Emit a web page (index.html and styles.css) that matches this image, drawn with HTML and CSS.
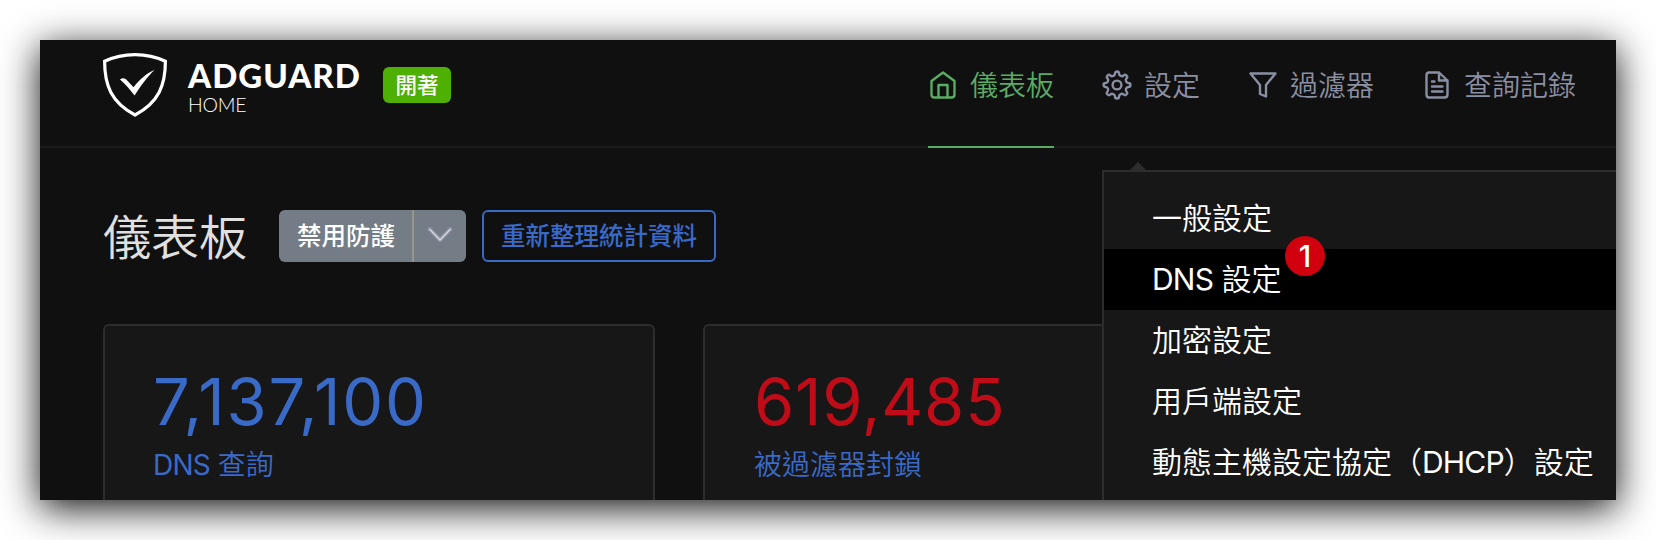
FILE: index.html
```html
<!DOCTYPE html>
<html lang="zh-Hant">
<head>
<meta charset="utf-8">
<title>AdGuard Home</title>
<link rel="stylesheet" href="styles.css">
</head>
<body>
<div class="window">
  <header class="header">
    <div class="brand">
      <svg class="shield" viewBox="0 0 64 64" fill="none">
        <path d="M32 1.6C21.500 1.600 10.500 4 1.600 8.300C1.600 32 8 49 32 62C56 49 62.400 32 62.400 8.300C53.500 4 42.500 1.600 32 1.600Z" stroke="#fff" stroke-width="3.2"/>
        <path d="M17 26.500C19.500 24.600 22 25 24.200 27.600L30.500 34.200C37 26.500 44 19.500 51.500 17C44.500 23.500 37.500 33 31.600 42.500C27.500 37 22.500 31.500 17 26.500Z" fill="#fff"/>
      </svg>
      <div class="wordmark"><span class="name">ADGUARD</span><span class="sub">HOME</span></div>
      <span class="status">開著</span>
    </div>
    <nav class="nav">
      <a class="link active"><svg class="icon" viewBox="0 0 30 30"><path d="M15 2.500L3.500 11V24.500Q3.500 27.500 6.500 27.500H23.500Q26.500 27.500 26.500 24.500V11Z M10.500 27.500V15H19.500V27.500"/></svg><span>儀表板</span></a>
      <a class="link"><svg class="icon" viewBox="0 0 30 30"><circle cx="15" cy="15" r="4.400"/><path d="M26.420 12.990A2.010 2.010 0 0 1 26.420 17.010A2.800 2.800 0 0 0 24.500 21.650A2.010 2.010 0 0 1 21.650 24.500A2.800 2.800 0 0 0 17.010 26.420A2.010 2.010 0 0 1 12.990 26.420A2.800 2.800 0 0 0 8.350 24.500A2.010 2.010 0 0 1 5.500 21.650A2.800 2.800 0 0 0 3.580 17.010A2.010 2.010 0 0 1 3.580 12.990A2.800 2.800 0 0 0 5.500 8.350A2.010 2.010 0 0 1 8.350 5.500A2.800 2.800 0 0 0 12.990 3.580A2.010 2.010 0 0 1 17.010 3.580A2.800 2.800 0 0 0 21.650 5.500A2.010 2.010 0 0 1 24.500 8.350A2.800 2.800 0 0 0 26.420 12.990Z"/></svg><span>設定</span></a>
      <a class="link"><svg class="icon" viewBox="0 0 30 30"><path d="M2.500 3.500H27.500L18 15V26.500L12 24V15Z"/></svg><span>過濾器</span></a>
      <a class="link"><svg class="icon" viewBox="0 0 30 30"><path d="M17 2.500H7Q4.500 2.500 4.500 5.500V24.500Q4.500 27.500 7 27.500H22.500Q25.500 27.500 25.500 24.500V10.500ZM17 2.500V10.500H25.500M10 11.500H12.500M10 16.500H20.500M10 21.500H20.500"/></svg><span>查詢記錄</span></a>
    </nav>
  </header>
  <main class="page">
    <div class="heading">
      <h1 class="title">儀表板</h1>
      <div class="split">
        <button class="protect">禁用防護</button>
        <button class="toggle"><svg class="chevron" viewBox="0 0 26 18" fill="none"><path d="M2.500 3L13 14L23.500 3" stroke="#8f93a6" stroke-width="4" stroke-linecap="round" stroke-linejoin="round"/><path d="M2.500 3L13 14L23.500 3" stroke="#d9d9df" stroke-width="1.300"/></svg></button>
      </div>
      <button class="refresh">重新整理統計資料</button>
    </div>
    <div class="cards">
      <section class="card"><div class="value queries">7,137,100</div><div class="label"><span class="latin">DNS</span> 查詢</div></section>
      <section class="card"><div class="value red">619,485</div><div class="label">被過濾器封鎖</div></section>
    </div>
  </main>
  <div class="menu">
    <svg class="arrow" viewBox="0 0 16 8"><path d="M0 8L8 0L16 8Z" fill="#2d2d2d"/></svg>
    <a class="item">一般設定</a>
    <a class="item current"><span class="latin">DNS</span> 設定<span class="marker">1</span></a>
    <a class="item">加密設定</a>
    <a class="item">用戶端設定</a>
    <a class="item">動態主機設定協定（<span class="latin">DHCP</span>）設定</a>
  </div>
</div>
</body>
</html>
```
FILE: styles.css
```css
* { box-sizing: border-box; }
body {
  margin: 0;
  padding: 40px;
  height: 540px;
  overflow: hidden;
  background: #fff;
  font-family: Inter, "Noto Sans CJK TC", sans-serif;
}
.window {
  position: relative;
  height: 460px;
  background: #101010;
  box-shadow: 0 8px 36px rgba(0, 0, 0, .95);
}
.header {
  display: flex;
  justify-content: space-between;
  height: 108px;
  padding: 0 40px 0 63px;
  border-bottom: 2px solid #1b1b1b;
}
.brand { display: flex; align-items: flex-start; }
.shield { width: 64px; height: 64px; margin-top: 13px; }
.wordmark {
  display: flex;
  flex-direction: column;
  width: 173px;
  margin: 19px 0 0 21px;
  color: #fff;
  white-space: nowrap;
}
.name { font: 900 33px/32px Lato, sans-serif; letter-spacing: 1px; }
.sub { font: 300 19.500px/28px Lato, sans-serif; letter-spacing: -.2px; }
.status {
  width: 68px;
  height: 36px;
  margin: 27px 0 0 22px;
  border-radius: 6px;
  background: #4fb004;
  color: #fff;
  font-size: 21.500px;
  font-weight: 500;
  line-height: 36px;
  text-align: center;
}
.nav { display: flex; gap: 48px; height: 108px; }
.link {
  display: flex;
  align-items: center;
  gap: 12px;
  height: 108px;
  padding-bottom: 18px;
  border-bottom: 2px solid transparent;
  color: #8a8fa3;
  font-size: 28px;
  font-weight: 350;
  line-height: 36px;
}
.link span { padding-top: 3px; }
.link.active { color: #5aab63; border-color: #5aab63; }
.icon {
  width: 30px;
  height: 30px;
  margin-top: 1px;
  fill: none;
  stroke: currentColor;
  stroke-width: 2.400;
  stroke-linejoin: round;
  stroke-linecap: round;
}
.page { padding: 62px 63px 0; }
.heading { display: flex; height: 52px; }
.title {
  width: 176px;
  margin: 0;
  color: #e0e0e0;
  font-size: 48px;
  font-weight: 350;
  line-height: 55px;
}
button {
  border: 0;
  padding: 0;
  background: none;
  font: 500 24.500px/50px Inter, "Noto Sans CJK TC", sans-serif;
}
.split {
  display: flex;
  width: 187px;
  border-radius: 6px;
  background: #747c85;
}
.protect { width: 133px; padding-left: 1px; color: #fff; }
.toggle {
  display: flex;
  align-items: center;
  justify-content: center;
  width: 54px;
  border-left: 2px solid #96968f;
}
.chevron { width: 26px; height: 18px; margin-bottom: 3px; }
.refresh {
  width: 234px;
  margin-left: 16px;
  border: 2px solid #3a6ac8;
  border-radius: 6px;
  color: #3a6ac8;
  line-height: 46px;
}
.cards { display: flex; gap: 48px; height: 176px; margin-top: 62px; overflow: hidden; }
.card {
  flex: 0 0 552px;
  height: 220px;
  padding: 42px 49px;
  border: 2px solid #2d2d2d;
  border-radius: 6px;
  background: #171717;
  color: #3a6ac8;
}
.value { font-size: 65px; line-height: 68px; letter-spacing: .8px; }
.queries { margin-left: -1px; letter-spacing: 1.800px; }
.red { color: #c00c18; }
.label { font-size: 28px; font-weight: 350; line-height: 58px; }
.latin { font-weight: 400; letter-spacing: -.8px; }
.label .latin { margin-left: -1px; }
.menu {
  position: absolute;
  top: 130px;
  right: 0;
  bottom: 0;
  width: 514px;
  padding-top: 16px;
  border: solid #2d2d2d;
  border-width: 2px 0 0 2px;
  background: #171717;
}
.arrow { position: absolute; top: -10px; left: 26px; width: 16px; height: 8px; }
.item {
  display: block;
  height: 61px;
  padding-left: 48px;
  color: #fff;
  font-size: 30px;
  font-weight: 350;
  line-height: 61px;
  white-space: nowrap;
}
.current { position: relative; background: #000; }
.marker {
  position: absolute;
  top: -13px;
  left: 181px;
  width: 40px;
  height: 40px;
  border-radius: 50%;
  background: #d0000f;
  font-size: 30px;
  font-weight: 500;
  line-height: 41px;
  text-align: center;
}
```
